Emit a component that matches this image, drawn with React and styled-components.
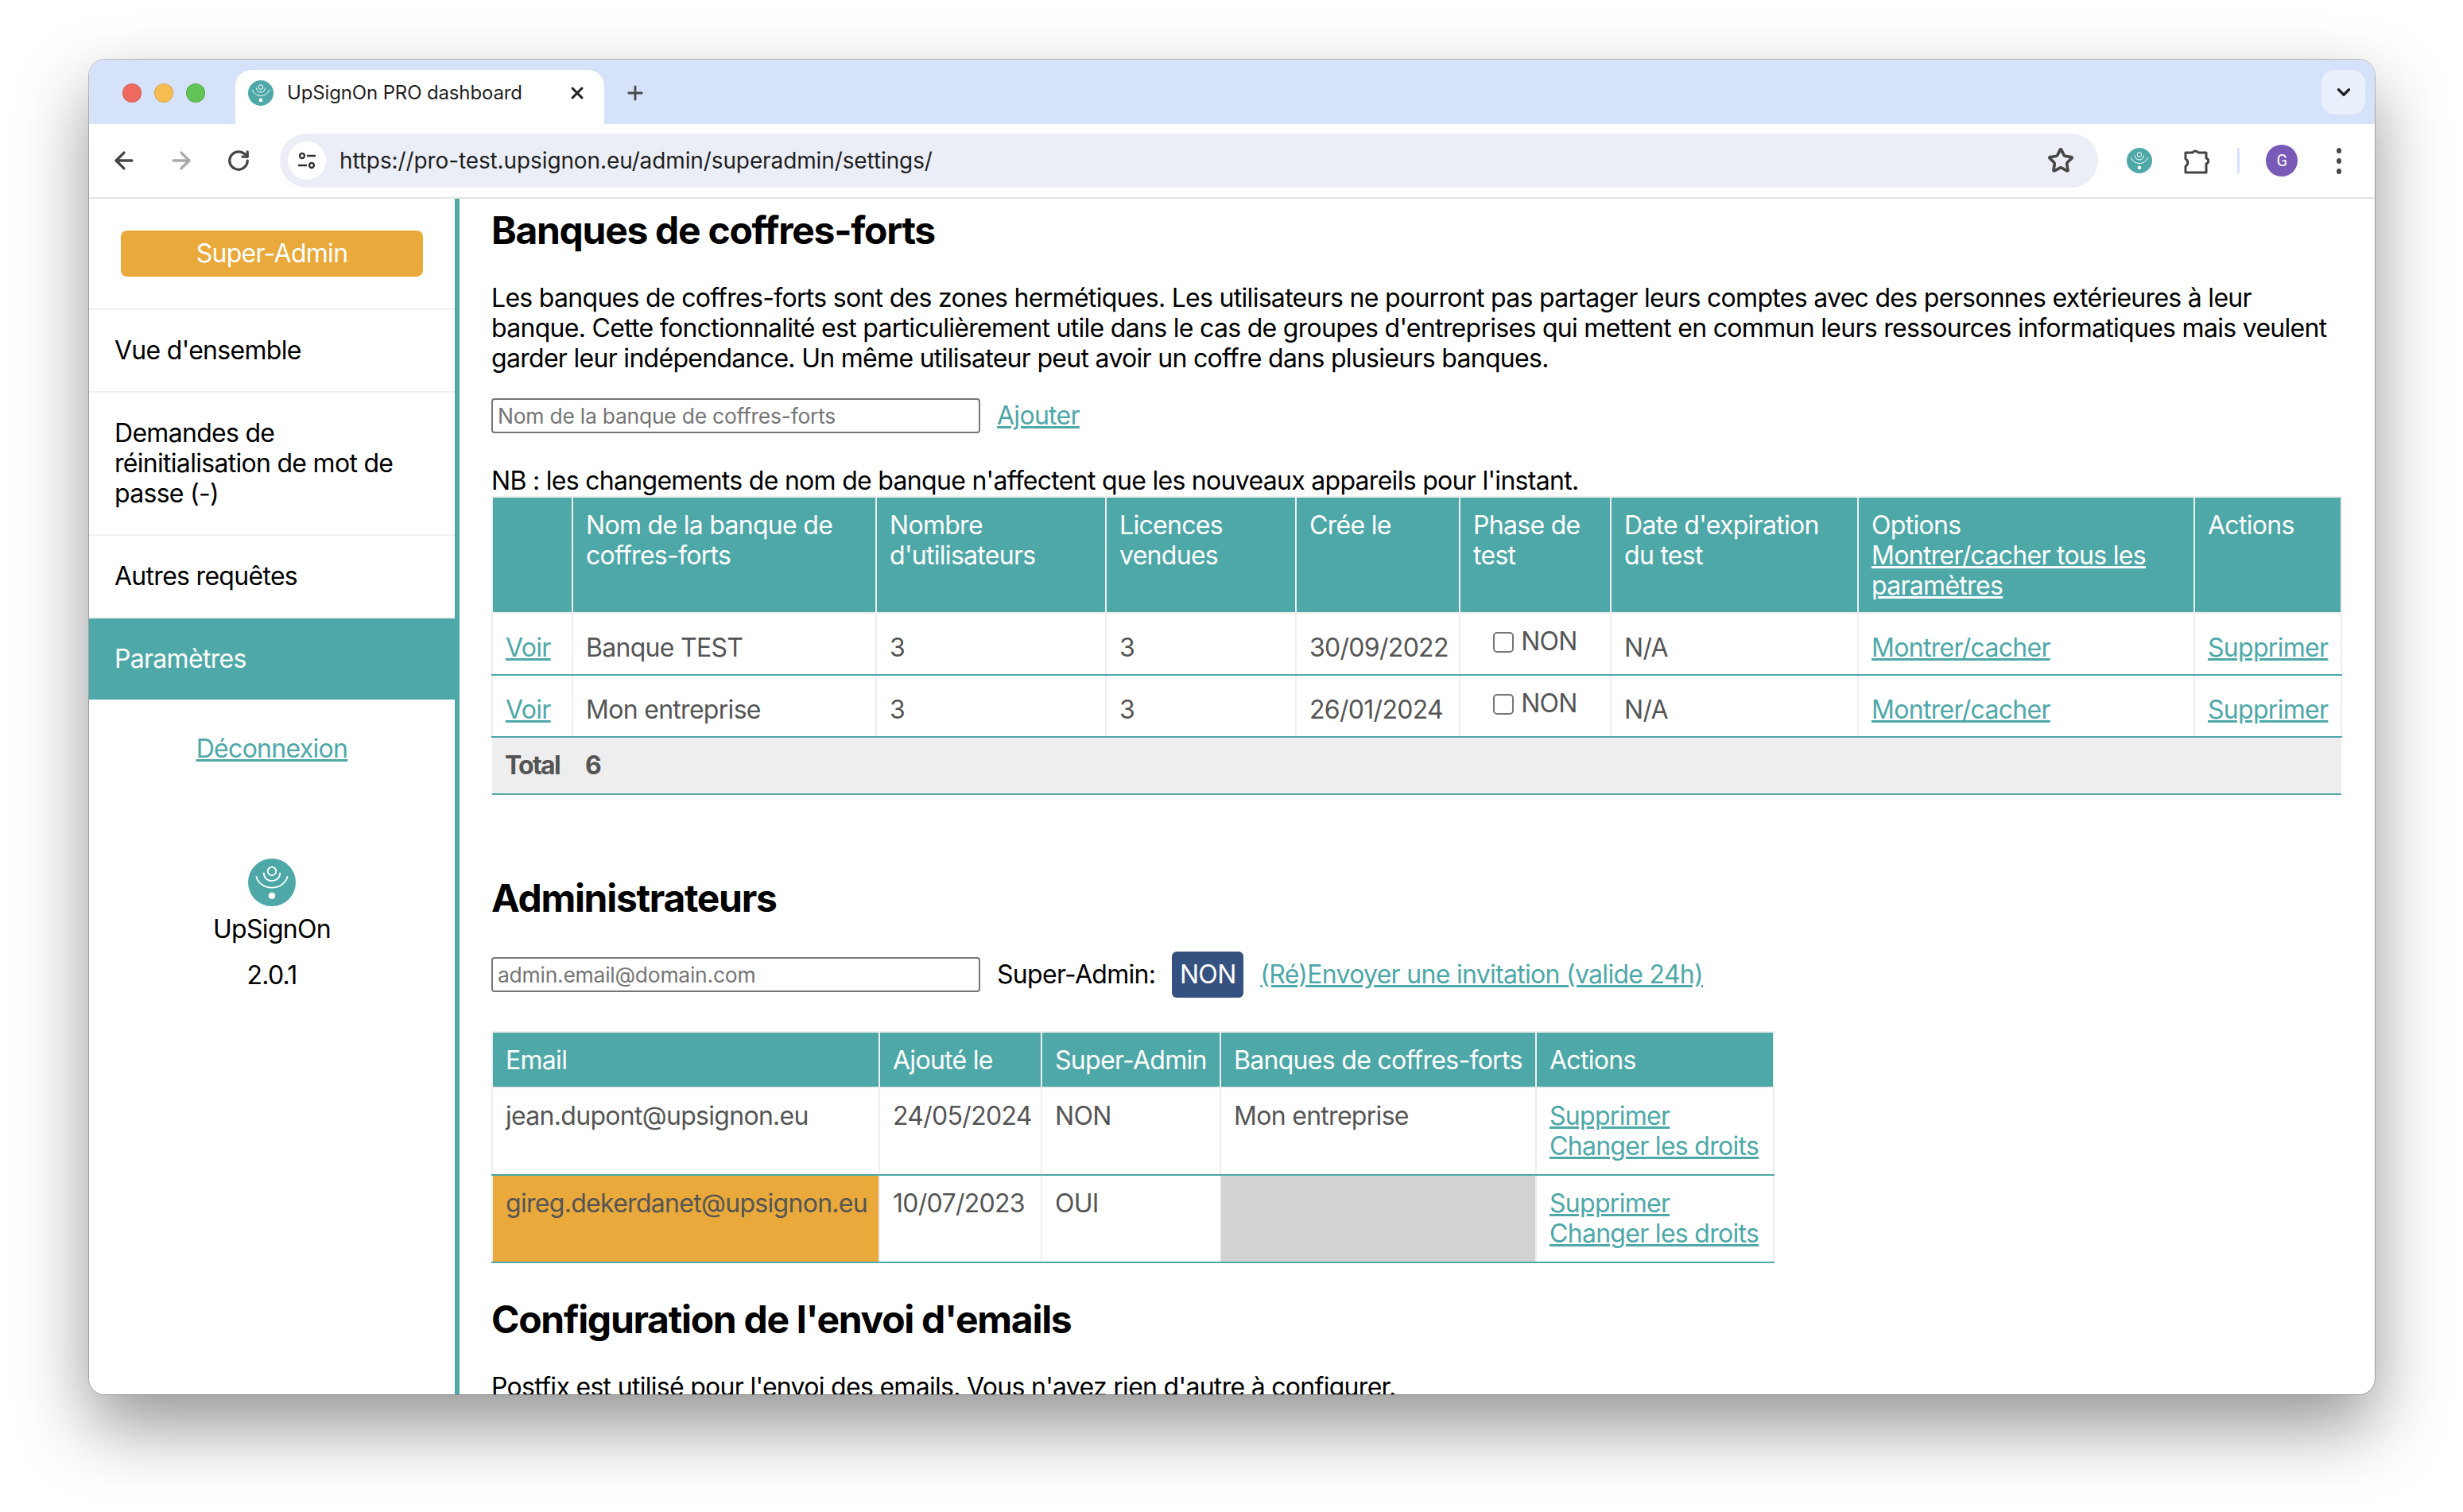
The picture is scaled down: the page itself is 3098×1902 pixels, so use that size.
import React from 'react'
import styled, { createGlobalStyle } from 'styled-components'
import { ArrowLeft, ArrowRight, RotateCw, Star, X, Plus, ChevronDown } from 'lucide-react'

const teal = '#4ea8a8'

const GlobalStyle = createGlobalStyle`
  html, body {
    margin: 0;
    padding: 0;
    background: #fff;
  }
  * {
    box-sizing: border-box;
  }
`

const Desktop = styled.div`
  width: 3098px;
  height: 1902px;
  padding: 75px 0 0 112px;
  overflow: hidden;
  font-family: Inter, 'Liberation Sans', sans-serif;
  font-size: 32px;
  line-height: 38px;
  letter-spacing: -0.022em;
  color: #000;
`

const Browser = styled.div`
  width: 2875px;
  height: 1679px;
  border-radius: 20px;
  overflow: hidden;
  display: flex;
  flex-direction: column;
  background: #fff;
  box-shadow: 0 40px 90px rgba(0, 0, 0, 0.42), 0 0 0 1px rgba(0, 0, 0, 0.22);
`

const TabStrip = styled.div`
  height: 81px;
  flex: none;
  display: flex;
  align-items: flex-end;
  background: #d5e2fa;
  padding-left: 42px;
`

const Lights = styled.div`
  display: flex;
  gap: 16px;
  height: 68px;
  padding-top: 17px;
  width: 142px;
`

const Light = styled.span`
  width: 24px;
  height: 24px;
  border-radius: 50%;
  background: ${(p) => p.$color};
  border: 1px solid rgba(0, 0, 0, 0.12);
`

const Tab = styled.div`
  width: 464px;
  height: 68px;
  background: #fff;
  border-radius: 20px 20px 0 0;
  display: flex;
  align-items: center;
  padding: 0 22px 10px 16px;
  font-size: 24px;
  letter-spacing: -0.006em;
  color: #1f1f1f;
  white-space: nowrap;
`

const TabTitle = styled.span`
  flex: 1;
  margin-left: 17px;
`

const NewTab = styled.div`
  height: 68px;
  margin-left: 25px;
  padding-top: 13px;
  color: #474747;
`

const StripEnd = styled.div`
  margin-left: auto;
  align-self: flex-start;
  margin-top: 13px;
  margin-right: 12px;
  width: 55px;
  height: 56px;
  border-radius: 16px;
  background: #e9f0fc;
  display: flex;
  align-items: center;
  justify-content: center;
  color: #1f1f1f;
`

const Toolbar = styled.div`
  height: 94px;
  flex: none;
  display: flex;
  align-items: center;
  border-bottom: 2px solid #e3e3e3;
  background: #fff;
  border-radius: 20px 20px 0 0;
  padding-left: 8px;
  color: #474747;
`

const NavButton = styled.div`
  width: 72px;
  height: 40px;
  flex: none;
  display: flex;
  align-items: center;
  justify-content: center;
  color: ${(p) => (p.$off ? '#a9a9a9' : '#474747')};
`

const UrlPill = styled.div`
  width: 2287px;
  height: 68px;
  flex: none;
  margin-left: 16px;
  border-radius: 34px;
  background: #ebeef6;
  display: flex;
  align-items: center;
  padding: 0 30px 0 10px;
`

const SiteInfo = styled.div`
  width: 48px;
  height: 48px;
  border-radius: 50%;
  background: #fff;
  display: flex;
  align-items: center;
  justify-content: center;
  flex: none;
`

const Url = styled.span`
  flex: 1;
  margin-left: 17px;
  font-size: 28px;
  letter-spacing: -0.004em;
  color: #1f1f1f;
`

const ToolIcons = styled.div`
  display: flex;
  align-items: center;
  margin-left: 36px;
`

const ToolGap = styled.span`
  width: 40px;
`

const Divider = styled.span`
  width: 3px;
  height: 32px;
  border-radius: 2px;
  background: #d5e2fa;
  margin: 0 33px 0 33px;
`

const Avatar = styled.span`
  width: 40px;
  height: 40px;
  border-radius: 50%;
  background: #7a5ab8;
  color: #fff;
  font-family: Roboto, sans-serif;
  font-size: 20px;
  display: flex;
  align-items: center;
  justify-content: center;
`

const Dots = styled.div`
  margin-left: 49px;
  display: flex;
  flex-direction: column;
  gap: 6px;
`

const Dot = styled.span`
  width: 6px;
  height: 7px;
  border-radius: 50%;
  background: #474747;
`

const Page = styled.div`
  flex: 1;
  min-height: 0;
  display: flex;
`

const Sidebar = styled.aside`
  width: 466px;
  flex: none;
  border-right: 6px solid ${teal};
  background: #fff;
`

const RoleBlock = styled.div`
  padding: 40px;
`

const RoleBadge = styled.div`
  height: 58px;
  border-radius: 8px;
  background: #e9a93b;
  color: #fff;
  text-align: center;
  line-height: 58px;
`

const NavItem = styled.div`
  padding: 32px;
  border-top: 2px solid #f0f0f0;
  background: ${(p) => (p.$active ? teal : 'transparent')};
  color: ${(p) => (p.$active ? '#fff' : '#000')};
`

const Logout = styled.div`
  margin-top: 43px;
  text-align: center;
`

const Brand = styled.div`
  margin-top: 119px;
  display: flex;
  flex-direction: column;
  align-items: center;
`

const BrandName = styled.div`
  margin-top: 10px;
`

const BrandVersion = styled.div`
  margin-top: 20px;
`

const A = styled.a`
  color: ${(p) => (p.$light ? '#fff' : teal)};
  text-decoration: underline;
  cursor: pointer;
`

const Content = styled.main`
  flex: 1;
  min-width: 0;
  overflow: hidden;
  padding: 11px 42px 0 40px;
`

const Heading = styled.h2`
  margin: ${(p) => p.$mt || 0}px 0 0;
  font-size: 48px;
  line-height: 58px;
  font-weight: 700;
  letter-spacing: -0.027em;
`

const Text = styled.p`
  margin: ${(p) => p.$mt || 0}px 0 0;
`

const FormRow = styled.div`
  margin-top: ${(p) => p.$mt}px;
  height: ${(p) => p.$h}px;
  display: flex;
  align-items: center;
  gap: 21px;
`

const TextInput = styled.input`
  width: 615px;
  height: 44px;
  border: 2px solid #767676;
  border-radius: 4px;
  padding: 0 6px;
  font-family: inherit;
  font-size: 26.5px;
  letter-spacing: -0.01em;
  &::placeholder {
    color: #757575;
  }
`

const Toggle = styled.button`
  width: 90px;
  height: 58px;
  border: none;
  border-radius: 6px;
  background: #35517f;
  color: #fff;
  font: inherit;
  letter-spacing: inherit;
  padding: 0;
`

const Table = styled.table`
  width: ${(p) => p.$w}px;
  margin-top: ${(p) => p.$mt || 0}px;
  table-layout: fixed;
  border-collapse: collapse;
  color: #555;
`

const Col = styled.col`
  width: ${(p) => p.$w}px;
`

const Th = styled.th`
  padding: 16px 16px 14px;
  background: ${teal};
  color: #fff;
  font-weight: 400;
  text-align: left;
  vertical-align: top;
  white-space: ${(p) => (p.$nowrap ? 'nowrap' : 'normal')};
  border: 2px solid #eee;
`

const Td = styled.td`
  padding: ${(p) => p.$pt || 16}px 16px ${(p) => p.$pb || 16}px;
  vertical-align: top;
  white-space: nowrap;
  background: ${(p) => p.$bg || 'transparent'};
  border-left: 2px solid #eee;
  border-right: 2px solid #eee;
  border-bottom: 2px solid ${teal};
`

const CheckCell = styled(Td)`
  padding-left: 0;
  padding-right: 0;
  text-align: center;
`

const Check = styled.input`
  appearance: none;
  width: 26px;
  height: 26px;
  margin: 0 9px 0 0;
  vertical-align: -3px;
  background: #fff;
  border: 2px solid #767676;
  border-radius: 5px;
`

const TotalRow = styled.tr`
  background: #eee;
  font-weight: 700;
`

const TotalCell = styled.td`
  padding: 16px;
  letter-spacing: -0.055em;
  border-bottom: 2px solid ${teal};
`

function Logo({ size }) {
  return (
    <svg width={size} height={size} viewBox="0 0 32 32" style={{ flex: 'none' }}>
      <circle cx="16" cy="16" r="16" fill={teal} />
      <circle cx="16" cy="8.5" r="2.8" fill="none" stroke="#fff" strokeWidth="1" />
      <path d="M10.5 9.5C10.5 13 13 15 16 15S21.5 13 21.5 9.5" fill="none" stroke="#fff" strokeWidth="1" />
      <path d="M5.5 11.8C6.5 16.5 11 19.5 16 19.5S25.5 16.5 26.5 11.8" fill="none" stroke="#fff" strokeWidth="1" />
      <circle cx="16" cy="24.9" r="2.3" fill="#fff" />
    </svg>
  )
}

function TuneIcon() {
  return (
    <svg width="24" height="24" viewBox="0 0 24 24" fill="none" stroke="#333" strokeWidth="2.4">
      <circle cx="6" cy="6" r="3" />
      <path d="M12 6h11M1 18h11" />
      <circle cx="18" cy="18" r="3" />
    </svg>
  )
}

function PuzzleIcon() {
  return (
    <svg width="34" height="34" viewBox="0 0 34 34" fill="none" stroke="#444" strokeWidth="3" strokeLinejoin="round">
      <path d="M2 7H11A4 4 0 0 1 18 7H28V14A3.6 3.6 0 0 1 28 21V32H2V24A5 5 0 0 0 2 15Z" />
    </svg>
  )
}

const banks = [
  { name: 'Banque TEST', users: 3, licences: 3, created: '30/09/2022' },
  { name: 'Mon entreprise', users: 3, licences: 3, created: '26/01/2024' },
]

const admins = [
  {
    email: 'jean.dupont@upsignon.eu',
    added: '24/05/2024',
    superAdmin: 'NON',
    banks: 'Mon entreprise',
  },
  {
    email: 'gireg.dekerdanet@upsignon.eu',
    added: '10/07/2023',
    superAdmin: 'OUI',
    me: true,
  },
]

export default function App() {
  return (
    <Desktop>
      <GlobalStyle />
      <Browser>
        <TabStrip>
          <Lights>
            <Light $color="#ee6a5f" />
            <Light $color="#f5bd4f" />
            <Light $color="#61c454" />
          </Lights>
          <Tab>
            <Logo size={32} />
            <TabTitle>UpSignOn PRO dashboard</TabTitle>
            <X size={24} strokeWidth={3} color="#1f1f1f" />
          </Tab>
          <NewTab>
            <Plus size={28} strokeWidth={2.4} />
          </NewTab>
          <StripEnd>
            <ChevronDown size={26} strokeWidth={3} />
          </StripEnd>
        </TabStrip>

        <Toolbar>
          <NavButton>
            <ArrowLeft size={34} strokeWidth={2.4} />
          </NavButton>
          <NavButton $off>
            <ArrowRight size={34} strokeWidth={2.4} />
          </NavButton>
          <NavButton>
            <RotateCw size={30} strokeWidth={2.6} />
          </NavButton>
          <UrlPill>
            <SiteInfo>
              <TuneIcon />
            </SiteInfo>
            <Url>https://pro-test.upsignon.eu/admin/superadmin/settings/</Url>
            <Star size={34} strokeWidth={2.6} />
          </UrlPill>
          <ToolIcons>
            <Logo size={32} />
            <ToolGap />
            <PuzzleIcon />
            <Divider />
            <Avatar>G</Avatar>
            <Dots>
              <Dot />
              <Dot />
              <Dot />
            </Dots>
          </ToolIcons>
        </Toolbar>

        <Page>
          <Sidebar>
            <RoleBlock>
              <RoleBadge>Super-Admin</RoleBadge>
            </RoleBlock>
            <NavItem>Vue d'ensemble</NavItem>
            <NavItem>Demandes de réinitialisation de mot de passe (-)</NavItem>
            <NavItem>Autres requêtes</NavItem>
            <NavItem $active>Paramètres</NavItem>
            <Logout>
              <A>Déconnexion</A>
            </Logout>
            <Brand>
              <Logo size={60} />
              <BrandName>UpSignOn</BrandName>
              <BrandVersion>2.0.1</BrandVersion>
            </Brand>
          </Sidebar>

          <Content>
            <Heading>Banques de coffres-forts</Heading>
            <Text $mt={37}>
              Les banques de coffres-forts sont des zones hermétiques. Les utilisateurs ne pourront pas partager leurs
              comptes avec des personnes extérieures à leur banque. Cette fonctionnalité est particulièrement utile dans
              le cas de groupes d'entreprises qui mettent en commun leurs ressources informatiques mais veulent garder
              leur indépendance. Un même utilisateur peut avoir un coffre dans plusieurs banques.
            </Text>
            <FormRow $mt={31} $h={44}>
              <TextInput placeholder="Nom de la banque de coffres-forts" />
              <A>Ajouter</A>
            </FormRow>
            <Text $mt={41}>NB : les changements de nom de banque n'affectent que les nouveaux appareils pour l'instant.</Text>
            <Table $w={2326}>
              <colgroup>
                <Col $w={101} />
                <Col $w={382} />
                <Col $w={289} />
                <Col $w={239} />
                <Col $w={206} />
                <Col $w={190} />
                <Col $w={311} />
                <Col $w={423} />
                <Col $w={185} />
              </colgroup>
              <thead>
                <tr>
                  <Th />
                  <Th>Nom de la banque de coffres-forts</Th>
                  <Th>Nombre d'utilisateurs</Th>
                  <Th>Licences vendues</Th>
                  <Th>Crée le</Th>
                  <Th>Phase de test</Th>
                  <Th>Date d'expiration du test</Th>
                  <Th>
                    Options
                    <br />
                    <A $light>Montrer/cacher tous les paramètres</A>
                  </Th>
                  <Th>Actions</Th>
                </tr>
              </thead>
              <tbody>
                {banks.map((b) => (
                  <tr key={b.name}>
                    <Td $pt={24} $pb={14}>
                      <A>Voir</A>
                    </Td>
                    <Td $pt={24} $pb={14}>{b.name}</Td>
                    <Td $pt={24} $pb={14}>{b.users}</Td>
                    <Td $pt={24} $pb={14}>{b.licences}</Td>
                    <Td $pt={24} $pb={14}>{b.created}</Td>
                    <CheckCell $pb={14}>
                      <Check type="checkbox" readOnly />
                      NON
                    </CheckCell>
                    <Td $pt={24} $pb={14}>N/A</Td>
                    <Td $pt={24} $pb={14}>
                      <A>Montrer/cacher</A>
                    </Td>
                    <Td $pt={24} $pb={14}>
                      <A>Supprimer</A>
                    </Td>
                  </tr>
                ))}
                <TotalRow>
                  <TotalCell>Total</TotalCell>
                  <TotalCell colSpan={8}>6</TotalCell>
                </TotalRow>
              </tbody>
            </Table>

            <Heading $mt={101}>Administrateurs</Heading>
            <FormRow $mt={38} $h={58}>
              <TextInput placeholder="admin.email@domain.com" />
              <span>Super-Admin:</span>
              <Toggle>NON</Toggle>
              <A>(Ré)Envoyer une invitation (valide 24h)</A>
            </FormRow>
            <Table $w={1612} $mt={42}>
              <colgroup>
                <Col $w={487} />
                <Col $w={204} />
                <Col $w={225} />
                <Col $w={397} />
                <Col $w={299} />
              </colgroup>
              <thead>
                <tr>
                  <Th $nowrap>Email</Th>
                  <Th $nowrap>Ajouté le</Th>
                  <Th $nowrap>Super-Admin</Th>
                  <Th $nowrap>Banques de coffres-forts</Th>
                  <Th $nowrap>Actions</Th>
                </tr>
              </thead>
              <tbody>
                {admins.map((a) => (
                  <tr key={a.email}>
                    <Td $bg={a.me ? '#e9a93b' : undefined}>{a.email}</Td>
                    <Td>{a.added}</Td>
                    <Td>{a.superAdmin}</Td>
                    <Td $bg={a.banks ? undefined : '#d2d2d2'}>{a.banks}</Td>
                    <Td>
                      <A>Supprimer</A>
                      <br />
                      <A>Changer les droits</A>
                    </Td>
                  </tr>
                ))}
              </tbody>
            </Table>

            <Heading $mt={42}>Configuration de l'envoi d'emails</Heading>
            <Text $mt={37}>Postfix est utilisé pour l'envoi des emails. Vous n'avez rien d'autre à configurer.</Text>
          </Content>
        </Page>
      </Browser>
    </Desktop>
  )
}
